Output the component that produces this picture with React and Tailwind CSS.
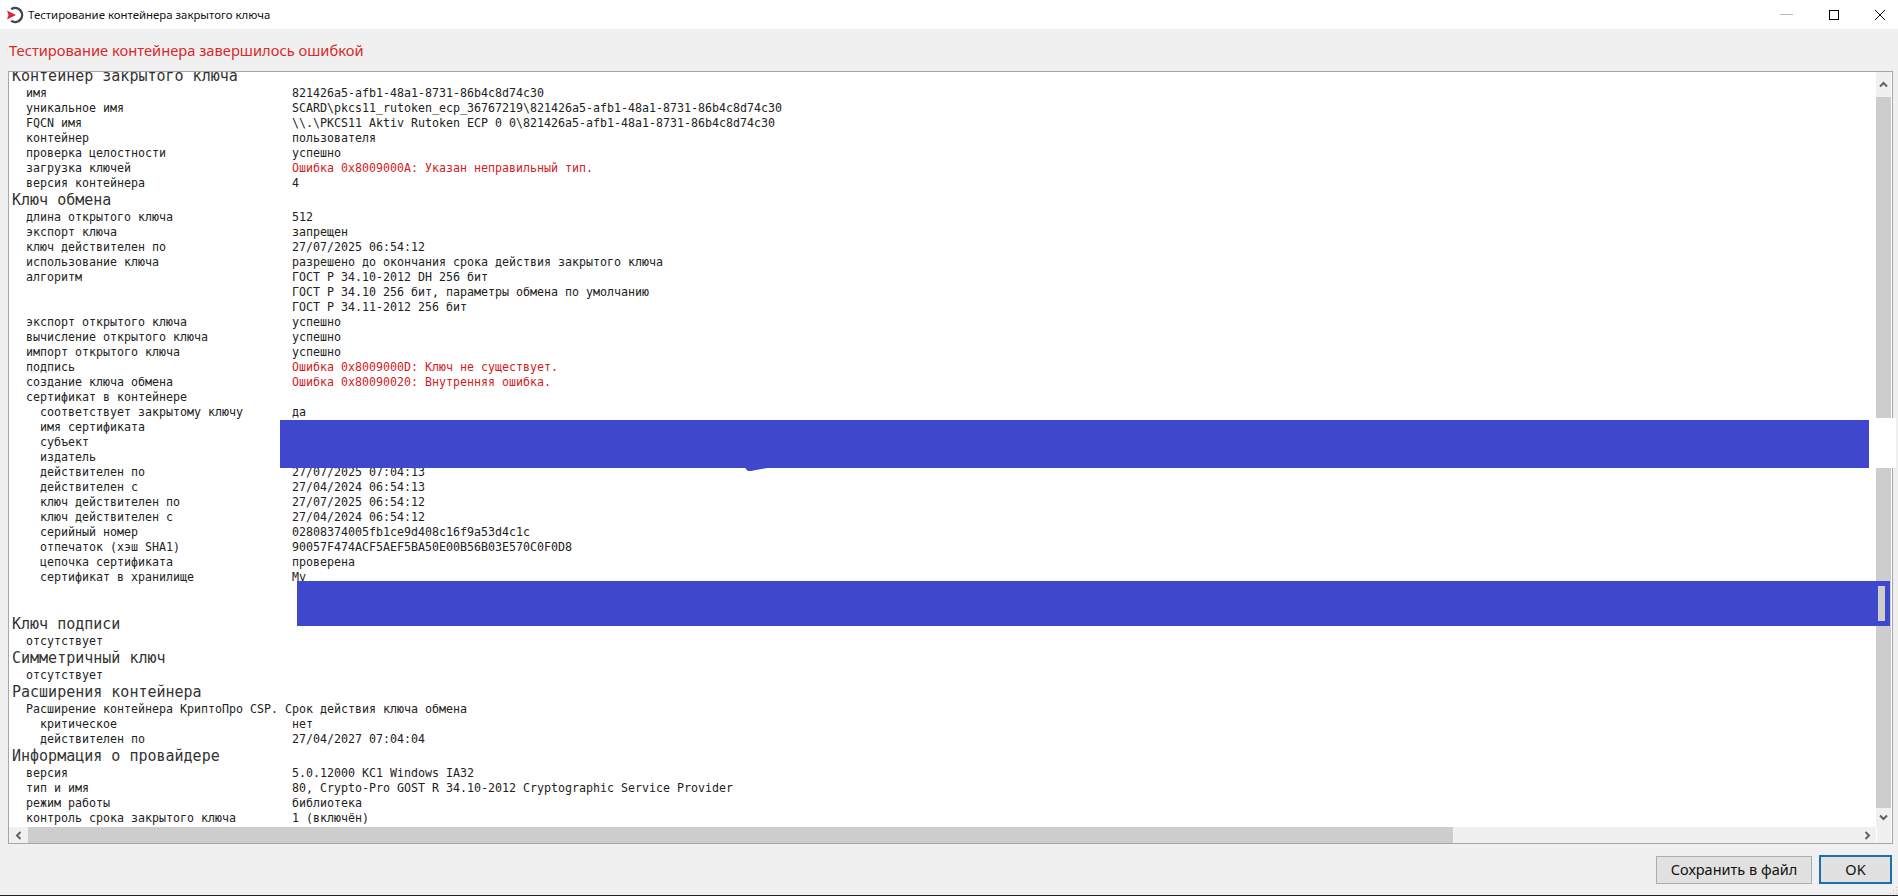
import React from 'react';

const UI_FONT = "font-['Noto_Sans','Open_Sans',sans-serif]";

// level -> indent of the label column
const INDENT = ['pl-[3px]', 'pl-[17px]', 'pl-[31px]'];

const rows = [
  { h: 'Контейнер закрытого ключа' },
  { l: 'имя', v: '821426a5-afb1-48a1-8731-86b4c8d74c30' },
  { l: 'уникальное имя', v: 'SCARD\\pkcs11_rutoken_ecp_36767219\\821426a5-afb1-48a1-8731-86b4c8d74c30' },
  { l: 'FQCN имя', v: '\\\\.\\PKCS11 Aktiv Rutoken ECP 0 0\\821426a5-afb1-48a1-8731-86b4c8d74c30' },
  { l: 'контейнер', v: 'пользователя' },
  { l: 'проверка целостности', v: 'успешно' },
  { l: 'загрузка ключей', v: 'Ошибка 0x8009000A: Указан неправильный тип.', err: true },
  { l: 'версия контейнера', v: '4' },
  { h: 'Ключ обмена' },
  { l: 'длина открытого ключа', v: '512' },
  { l: 'экспорт ключа', v: 'запрещен' },
  { l: 'ключ действителен по', v: '27/07/2025 06:54:12' },
  { l: 'использование ключа', v: 'разрешено до окончания срока действия закрытого ключа' },
  { l: 'алгоритм', v: 'ГОСТ Р 34.10-2012 DH 256 бит' },
  { l: '', v: 'ГОСТ Р 34.10 256 бит, параметры обмена по умолчанию' },
  { l: '', v: 'ГОСТ Р 34.11-2012 256 бит' },
  { l: 'экспорт открытого ключа', v: 'успешно' },
  { l: 'вычисление открытого ключа', v: 'успешно' },
  { l: 'импорт открытого ключа', v: 'успешно' },
  { l: 'подпись', v: 'Ошибка 0x8009000D: Ключ не существует.', err: true },
  { l: 'создание ключа обмена', v: 'Ошибка 0x80090020: Внутренняя ошибка.', err: true },
  { l: 'сертификат в контейнере', v: '' },
  { l: 'соответствует закрытому ключу', v: 'да', lv: 2 },
  { l: 'имя сертификата', v: '', lv: 2 },
  { l: 'субъект', v: '', lv: 2 },
  { l: 'издатель', v: '', lv: 2 },
  { l: 'действителен по', v: '27/07/2025 07:04:13', lv: 2 },
  { l: 'действителен с', v: '27/04/2024 06:54:13', lv: 2 },
  { l: 'ключ действителен по', v: '27/07/2025 06:54:12', lv: 2 },
  { l: 'ключ действителен с', v: '27/04/2024 06:54:12', lv: 2 },
  { l: 'серийный номер', v: '02808374005fb1ce9d408c16f9a53d4c1c', lv: 2 },
  { l: 'отпечаток (хэш SHA1)', v: '90057F474ACF5AEF5BA50E00B56B03E570C0F0D8', lv: 2 },
  { l: 'цепочка сертификата', v: 'проверена', lv: 2 },
  { l: 'сертификат в хранилище', v: 'My', lv: 2 },
  { l: '', v: '' },
  { l: '', v: '' },
  { h: 'Ключ подписи' },
  { l: 'отсутствует', v: '' },
  { h: 'Симметричный ключ' },
  { l: 'отсутствует', v: '' },
  { h: 'Расширения контейнера' },
  { l: 'Расширение контейнера КриптоПро CSP. Срок действия ключа обмена', v: '', wide: true },
  { l: 'критическое', v: 'нет', lv: 2 },
  { l: 'действителен по', v: '27/04/2027 07:04:04', lv: 2 },
  { h: 'Информация о провайдере' },
  { l: 'версия', v: '5.0.12000 KC1 Windows IA32' },
  { l: 'тип и имя', v: '80, Crypto-Pro GOST R 34.10-2012 Cryptographic Service Provider' },
  { l: 'режим работы', v: 'библиотека' },
  { l: 'контроль срока закрытого ключа', v: '1 (включён)' },
];

const Row = ({ row }) => {
  if (row.h) {
    return <div className="h-[19px] pl-[3px] text-[15px] leading-[19px] text-[#333]">{row.h}</div>;
  }
  const indent = INDENT[row.lv ?? 1];
  return (
    <div className="flex h-[15px] text-[11.63px] leading-[15px] text-[#222]">
      <span className={row.wide ? `${indent} shrink-0` : `${indent} w-[283px] shrink-0`}>{row.l}</span>
      <span className={row.err ? 'text-[#d01c24]' : ''}>{row.v}</span>
    </div>
  );
};

const ChevronUp = () => (
  <svg width="9" height="7" viewBox="0 0 9 7" fill="none" stroke="#606060" strokeWidth="2">
    <path d="M1 5.5 L4.5 2 L8 5.5" />
  </svg>
);
const ChevronDown = () => (
  <svg width="9" height="7" viewBox="0 0 9 7" fill="none" stroke="#606060" strokeWidth="2">
    <path d="M1 1.5 L4.5 5 L8 1.5" />
  </svg>
);
const ChevronLeft = () => (
  <svg width="7" height="9" viewBox="0 0 7 9" fill="none" stroke="#606060" strokeWidth="2">
    <path d="M5.5 1 L2 4.5 L5.5 8" />
  </svg>
);
const ChevronRight = () => (
  <svg width="7" height="9" viewBox="0 0 7 9" fill="none" stroke="#606060" strokeWidth="2">
    <path d="M1.5 1 L5 4.5 L1.5 8" />
  </svg>
);

const AppIcon = () => (
  <svg width="18" height="18" viewBox="0 0 18 18" fill="none">
    <path d="M5.2 3.2 A7 7 0 1 1 5.2 14.8" stroke="#3c4a58" strokeWidth="2.4" />
    <path d="M1 4.5 L10 9 L1 13.5 L2.5 9 Z" fill="#e0243a" />
  </svg>
);

// size grip in the lower right corner of the window
const Grip = () => (
  <svg width="9" height="9" viewBox="0 0 9 9" fill="#c4c4c4" className="absolute bottom-px right-0">
    <rect x="7" y="1" width="1" height="1" />
    <rect x="4" y="4" width="1" height="1" />
    <rect x="7" y="4" width="1" height="1" />
    <rect x="1" y="7" width="1" height="1" />
    <rect x="4" y="7" width="1" height="1" />
    <rect x="7" y="7" width="1" height="1" />
  </svg>
);

export default function App() {
  return (
    <div className={`relative flex h-[896px] w-full flex-col overflow-hidden bg-[#f0f0f0] ${UI_FONT}`}>
      {/* title bar */}
      <div className="flex h-[29px] shrink-0 items-center bg-white pl-[6px] pr-[13px]">
        <AppIcon />
        <span className="ml-[4px] text-[11.4px] text-[#111]">Тестирование контейнера закрытого ключа</span>
        <div className="ml-auto flex items-center gap-[36px]">
          <div className="h-px w-[13px] bg-[#b8b8b8]" />
          <div className="h-[10px] w-[10px] border border-black" />
          <svg width="10" height="10" viewBox="0 0 10 10" stroke="#111" strokeWidth="1" className="block">
            <path d="M0 0 L10 10 M10 0 L0 10" />
          </svg>
        </div>
      </div>

      {/* status */}
      <div className="flex h-[42px] shrink-0 items-center pl-[9px] text-[14.7px] text-[#d9292b]">
        Тестирование контейнера завершилось ошибкой
      </div>

      {/* report box */}
      <div className="ml-[8px] mr-[5px] flex h-[773px] shrink-0 flex-col border border-[#a6a6a6] bg-white pr-[1px] font-['DejaVu_Sans_Mono',monospace]">
        <div className="flex min-h-0 flex-1">
          <div className="min-w-0 flex-1 overflow-hidden whitespace-pre">
            <div className="-mt-[5px]">
              {rows.map((row, i) => (
                <Row key={i} row={row} />
              ))}
            </div>
          </div>
          <div className="flex w-[15px] shrink-0 flex-col bg-[#f0f0f0]">
            <div className="flex h-[25px] items-center justify-center"><ChevronUp /></div>
            <div className="flex-1 bg-[#cdcdcd]" />
            <div className="flex h-[19px] items-center justify-center"><ChevronDown /></div>
          </div>
        </div>
        <div className="flex h-[16px] shrink-0 bg-[#f0f0f0]">
          <div className="flex w-[19px] items-center justify-center"><ChevronLeft /></div>
          <div className="w-[1425px] bg-[#cdcdcd]" />
          <div className="flex flex-1 items-center justify-end pr-[5px]"><ChevronRight /></div>
          <div className="w-[15px] border-l border-white" />
        </div>
      </div>

      {/* buttons */}
      <div className="flex flex-1 items-start justify-end gap-[7px] pr-[6px] pt-[11px] text-[14.5px] text-[#111]">
        <button className="mt-px h-[28px] w-[156px] border border-[#adadad] bg-[#e1e1e1]">Сохранить в файл</button>
        <button className="h-[29px] w-[73px] border-2 border-[#1f6fa8] bg-[#e1e1e1]">OK</button>
      </div>
      <div className="h-px shrink-0 bg-[#222]" />
      <Grip />

      {/* painted-over areas of the screenshot */}
      <div className="absolute left-[280px] top-[420px] h-[48px] w-[1589px] bg-[#3f48cc]" />
      <svg width="22" height="3" viewBox="0 0 22 3" className="absolute left-[745px] top-[468px]">
        <path d="M0 0 H22 L6 3 H3 Z" fill="#3f48cc" />
      </svg>
      <div className="absolute left-[1869px] top-[418px] h-[50px] w-[27px] bg-white" />
      <div className="absolute left-[297px] top-[581px] h-[45px] w-[1593px] bg-[#3f48cc]" />
      <div className="absolute left-[1878px] top-[586px] h-[35px] w-[7px] bg-[#cdcdcd]" />
    </div>
  );
}
